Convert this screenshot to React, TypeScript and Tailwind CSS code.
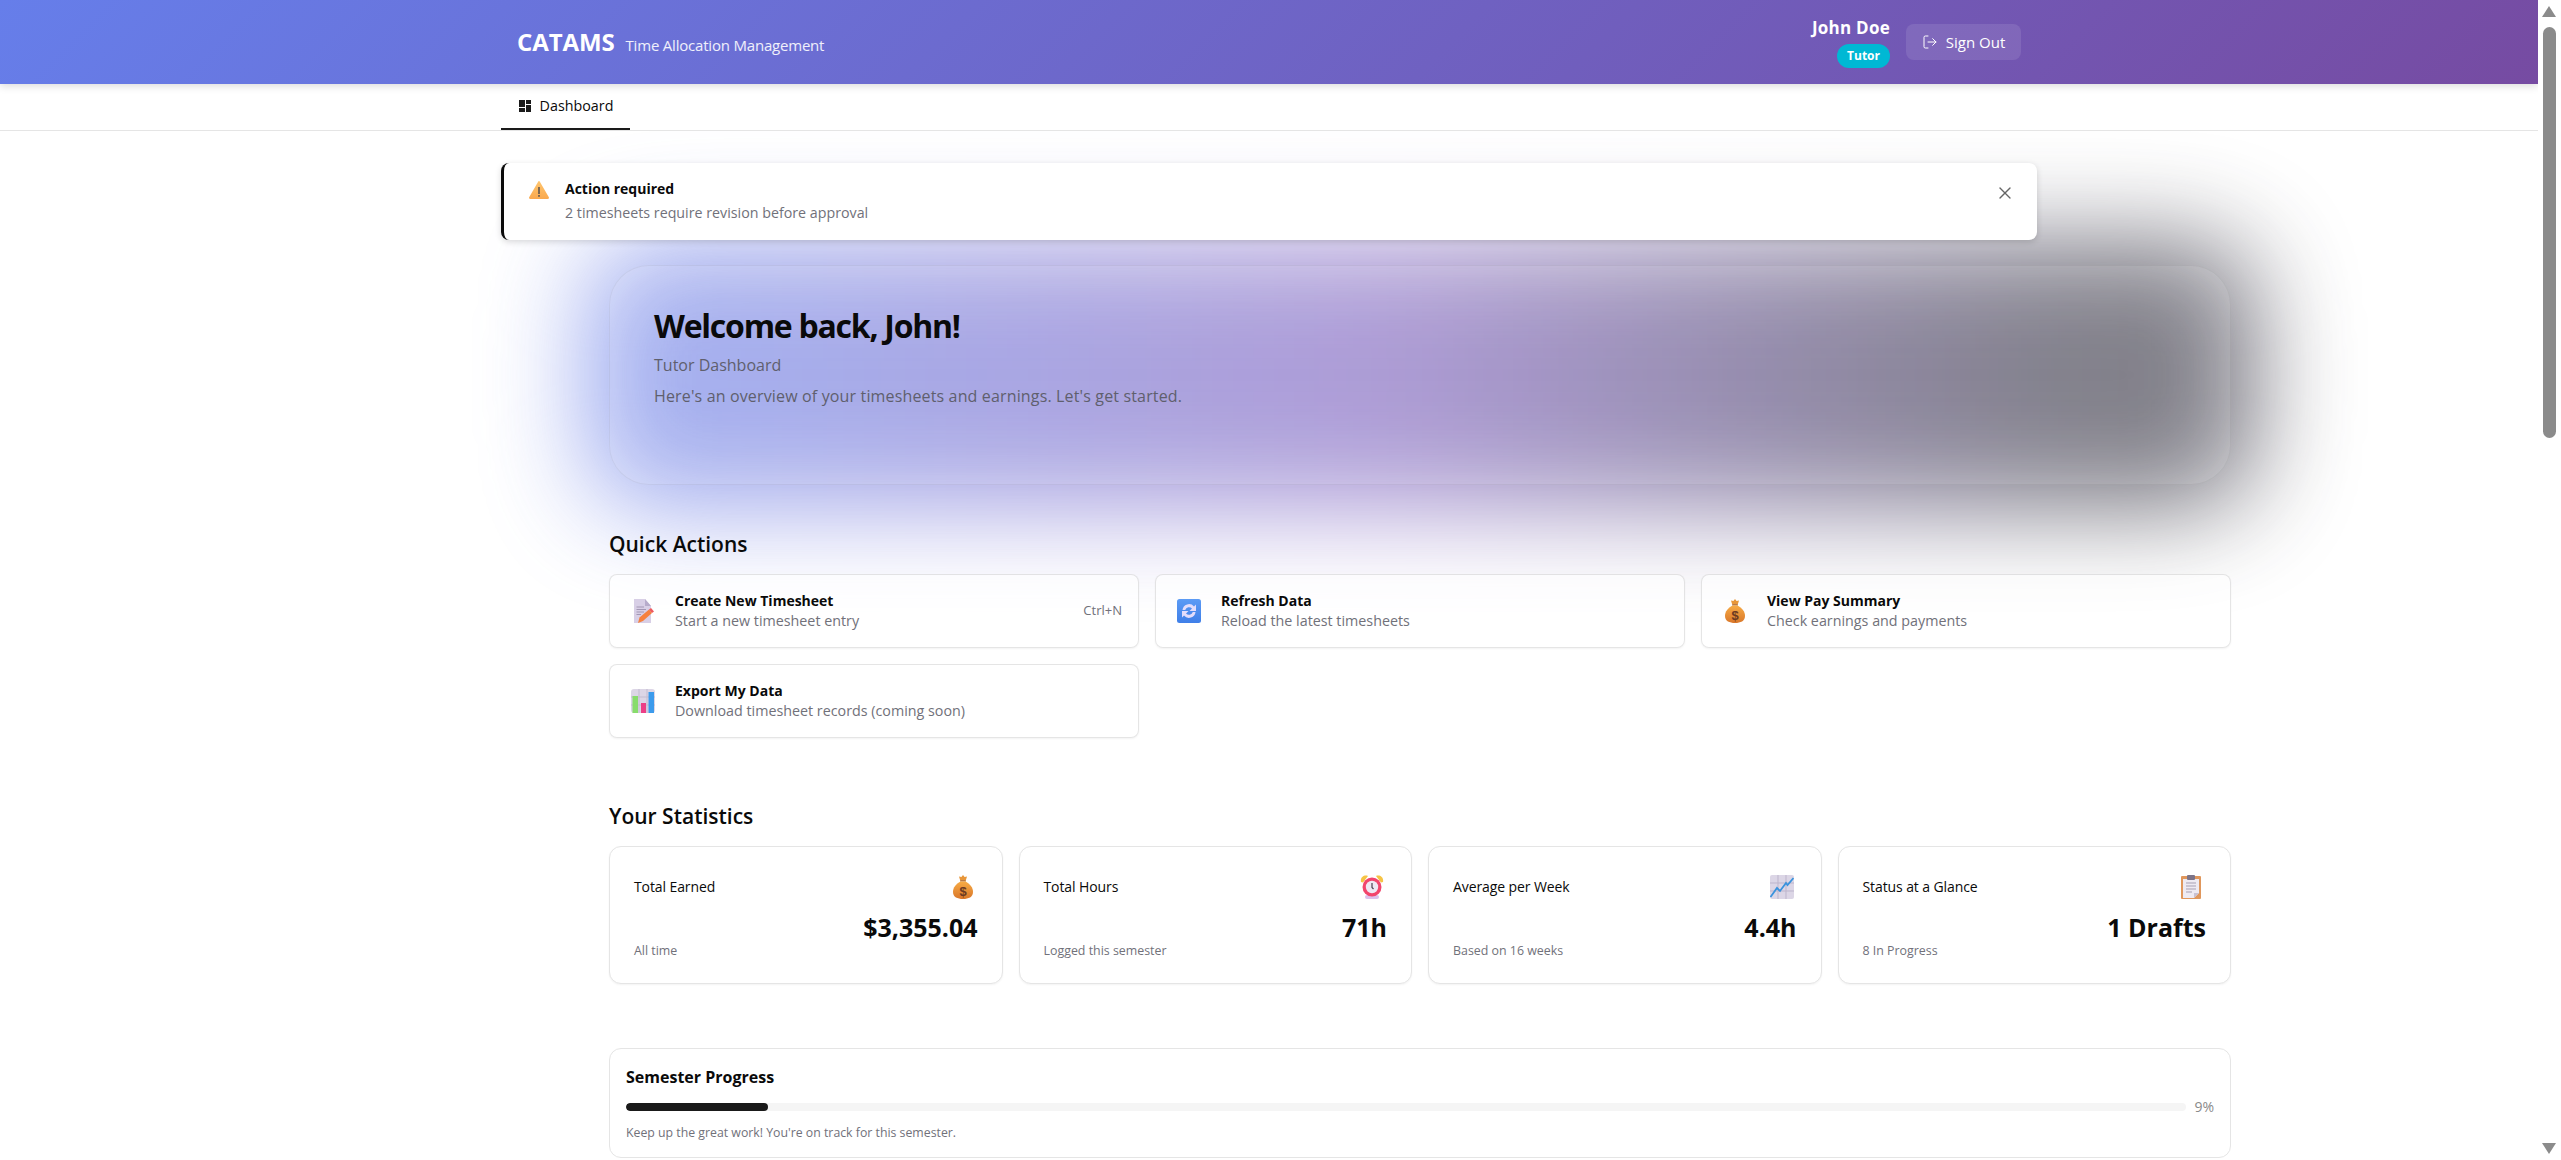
import { LogOut, X } from "lucide-react";

const font = "[font-family:'Open_Sans',sans-serif]";

const WarningIcon = () => (
  <svg width="20" height="18" viewBox="0 0 20 18">
    <defs>
      <linearGradient id="warn" x1="0" y1="0" x2="0" y2="1">
        <stop offset="0" stopColor="#ffc56e" />
        <stop offset="1" stopColor="#f9a94f" />
      </linearGradient>
    </defs>
    <path d="M10 0 Q10.6 0 11 1 L20 16.5 Q20 18 18.5 18 H1.5 Q0 18 0 16.5 L9 1 Q9.4 0 10 0 Z" fill="url(#warn)" />
    <rect x="9.2" y="6" width="1.6" height="7" fill="#5d5550" />
    <rect x="9.2" y="14" width="1.6" height="1.8" fill="#5d5550" />
  </svg>
);

const MemoIcon = () => (
  <svg width="24" height="24" viewBox="0 0 24 24">
    <path d="M3 0 H14 L20 7 V24 H3 Z" fill="#d8cfe6" />
    <path d="M14 0 L20 7 H14 Z" fill="#b7accb" />
    <path d="M5.5 8 H13 M5.5 10.5 H15 M5.5 13 H13 M5.5 15.5 H10" stroke="#a397b4" strokeWidth="1" />
    <path d="M7 24 L8.5 18.5 L18 10.5 L21 14 L12 22 Z" fill="#f6813f" />
    <path d="M18 10.5 L20 9 L23 12.5 L21 14 Z" fill="#ee5a5f" />
  </svg>
);

const RefreshIcon = () => (
  <svg width="24" height="24" viewBox="0 0 24 24">
    <defs>
      <linearGradient id="refresh" x1="0" y1="0" x2="0" y2="1">
        <stop offset="0" stopColor="#5c9bf5" />
        <stop offset="1" stopColor="#3f7fe8" />
      </linearGradient>
    </defs>
    <rect x="0" y="0" width="24" height="24" rx="2.5" fill="url(#refresh)" />
    <path d="M5.5 11 A6.5 6.5 0 0 1 17 7.5 L19 5.5 V12 H12.5 L15 9.6 A4 4 0 0 0 8.2 11 Z" fill="#e3ddfb" />
    <path d="M18.5 13 A6.5 6.5 0 0 1 7 16.5 L5 18.5 V12 H11.5 L9 14.4 A4 4 0 0 0 15.8 13 Z" fill="#e3ddfb" />
  </svg>
);

const BagIcon = () => (
  <svg width="24" height="24" viewBox="0 0 24 24">
    <defs>
      <linearGradient id="bag" x1="0" y1="0" x2="0" y2="1">
        <stop offset="0" stopColor="#f7ab45" />
        <stop offset="1" stopColor="#d9772a" />
      </linearGradient>
    </defs>
    <path d="M12 0 L13.6 2 L16 1.5 L14.8 5.5 H9.2 L8 1.5 L10.4 2 Z" fill="#e8973a" />
    <rect x="9" y="5.2" width="6" height="1.4" rx="0.7" fill="#a8622a" />
    <path d="M9.5 6.5 H14.5 C19 9 22 12.5 22 17 C22 22 17.5 24 12 24 C6.5 24 2 22 2 17 C2 12.5 5 9 9.5 6.5 Z" fill="url(#bag)" />
    <text x="12" y="20.5" textAnchor="middle" fontSize="13" fontWeight="700" fill="#6b3a22" fontFamily="'Liberation Sans',sans-serif">$</text>
  </svg>
);

const BarsIcon = () => (
  <svg width="24" height="24" viewBox="0 0 24 24">
    <rect x="0" y="0" width="24" height="24" rx="3" fill="#dcd6e6" />
    <path d="M0 8 H24 M0 16 H24 M8 0 V24 M16 0 V24" stroke="#c3bcd0" strokeWidth="1" />
    <rect x="1.5" y="7" width="5.5" height="17" fill="#88dc6c" />
    <rect x="10" y="14" width="5" height="10" fill="#ec3f86" />
    <rect x="17.5" y="3" width="5.5" height="21" fill="#3c9bec" />
  </svg>
);

const ClockIcon = () => (
  <svg width="24" height="24" viewBox="0 0 24 24">
    <path d="M1 7 C0 2.5 4 -0.5 8 1 L3 7.5 Z M23 7 C24 2.5 20 -0.5 16 1 L21 7.5 Z" fill="#f6c445" />
    <rect x="5" y="20" width="14" height="4" rx="2" fill="#dcc0ec" />
    <circle cx="12" cy="12" r="9.5" fill="#f2456d" />
    <circle cx="12" cy="12" r="6.2" fill="#efe8f4" />
    <path d="M12 8 V12.5 L13.5 14" stroke="#4a4150" strokeWidth="1.2" fill="none" />
  </svg>
);

const ChartIcon = () => (
  <svg width="24" height="24" viewBox="0 0 24 24">
    <rect x="0" y="0" width="24" height="24" rx="2" fill="#dcd6e6" />
    <path d="M0 8 H24 M0 16 H24 M8 0 V24 M16 0 V24" stroke="#bdb5cc" strokeWidth="1" />
    <path d="M0.5 22 L7 13 L10 16 L16 8 L17.5 10 L23.5 3" fill="none" stroke="#3a93dd" strokeWidth="1.8" />
  </svg>
);

const ClipboardIcon = () => (
  <svg width="24" height="24" viewBox="0 0 24 24">
    <rect x="2" y="1" width="20" height="23" rx="1" fill="#e0975c" />
    <path d="M4 4 H20 V18 L15 23 H4 Z" fill="#eeeaf2" />
    <path d="M20 18 L15 23 V18 Z" fill="#c9c1d2" />
    <rect x="8" y="0" width="8" height="5" rx="1" fill="#7c7488" />
    <path d="M7 8 H17 M7 11 H17 M7 14 H17 M7 17 H13" stroke="#a79fb2" strokeWidth="1" />
  </svg>
);

const actions = [
  { icon: <MemoIcon />, title: "Create New Timesheet", sub: "Start a new timesheet entry", kbd: "Ctrl+N" },
  { icon: <RefreshIcon />, title: "Refresh Data", sub: "Reload the latest timesheets" },
  { icon: <BagIcon />, title: "View Pay Summary", sub: "Check earnings and payments" },
  { icon: <BarsIcon />, title: "Export My Data", sub: "Download timesheet records (coming soon)" },
];

const stats = [
  { label: "Total Earned", value: "$3,355.04", sub: "All time", icon: <BagIcon /> },
  { label: "Total Hours", value: "71h", sub: "Logged this semester", icon: <ClockIcon /> },
  { label: "Average per Week", value: "4.4h", sub: "Based on 16 weeks", icon: <ChartIcon /> },
  { label: "Status at a Glance", value: "1 Drafts", sub: "8 In Progress", icon: <ClipboardIcon /> },
];

export default function App() {
  return (
    <div className={`${font} h-[1160px] overflow-hidden flex bg-white text-[#0a0a0a]`}>
      <div className="w-[2538px] shrink-0 relative overflow-hidden">
        <header className="relative z-20 h-[84px] bg-[linear-gradient(135deg,#667eea_0%,#764ba2_100%)] shadow-[0_2px_8px_rgba(0,0,0,0.15)]">
          <div className="w-[1536px] mx-auto h-full px-4 flex items-center justify-between text-white">
            <div className="flex items-baseline gap-[11px]">
              <span className="text-[24px] font-bold tracking-[-0.1px]">CATAMS</span>
              <span className="text-[15px] text-white/90 tracking-[-0.2px]">Time Allocation Management</span>
            </div>
            <div className="flex items-center gap-4">
              <div className="flex flex-col items-end gap-[6px] mt-[2px]">
                <span className="text-[17px] leading-5 font-bold tracking-[0.25px]">John Doe</span>
                <span className="h-6 px-[10px] rounded-full bg-[#00b8d4] text-[12px] font-bold leading-6">Tutor</span>
              </div>
              <button className="h-9 w-[115px] rounded-lg bg-white/10 flex items-center justify-center gap-2 text-[15px]">
                <LogOut size={16} strokeWidth={1.5} />
                Sign Out
              </button>
            </div>
          </div>
        </header>

        <nav className="relative z-10 h-[47px] border-b border-[#e5e5e5] bg-white">
          <div className="w-[1536px] mx-auto">
            <div className="w-[129px] h-[46px] border-b-2 border-[#1a1a1a] flex items-center justify-center gap-2 text-[14.3px]">
              <svg width="14" height="14" viewBox="0 0 14 14" fill="#1a1a1a">
                <rect x="1" y="1" width="6" height="7" />
                <rect x="8" y="1" width="5" height="4" />
                <rect x="1" y="9" width="6" height="4" />
                <rect x="8" y="6" width="5" height="7" />
              </svg>
              Dashboard
            </div>
          </div>
        </nav>

        <main className="pt-8">
          <div className="relative z-10 mx-auto w-[1536px] h-[77px] rounded-lg bg-white border-l-[3px] border-[#0a0a0a] shadow-[0_2px_6px_rgba(0,0,0,0.15)] flex justify-between pl-[25px] pr-[22px] pt-[16px]">
            <div className="flex gap-4">
              <div className="pt-[2px]">
                <WarningIcon />
              </div>
              <div>
                <div className="text-[14px] leading-5 font-bold">Action required</div>
                <div className="text-[14.25px] leading-5 mt-1 text-[#71717a]">2 timesheets require revision before approval</div>
              </div>
            </div>
            <X size={20} strokeWidth={1.6} className="mt-[4px] text-[#666666]" />
          </div>

          <div className="ml-[609px] w-[1622px]">
            <section className="relative mt-[25px] h-[220px]">
              <div className="absolute -inset-[22px] rounded-[60px] blur-[52px] opacity-[0.65] bg-[linear-gradient(90deg,#667eea_0%,#7557ba_48%,#2a2838_90%)]" />
              <div className="relative h-full rounded-[40px] border border-black/5 bg-white/10 px-[44px] pt-[38px]">
                <h1 className="text-[32px] leading-[44px] font-bold tracking-[-1.25px] text-[#0a0a0a]">Welcome back, John!</h1>
                <p className="text-[16px] leading-6 mt-[5px] text-[#5f5f6d]">Tutor Dashboard</p>
                <p className="text-[16px] leading-6 mt-[7px] text-[#5f5f6d] tracking-[0.15px]">Here's an overview of your timesheets and earnings. Let's get started.</p>
              </div>
            </section>

            <section className="relative mt-[45px]">
              <h2 className="text-[21px] leading-7 font-semibold">Quick Actions</h2>
              <div className="grid grid-cols-3 gap-4 mt-4">
                {actions.map((a) => (
                  <div key={a.title} className="h-[74px] rounded-lg border border-black/10 bg-white/60 shadow-[0_1px_2px_rgba(0,0,0,0.05)] flex items-center pl-[21px] pr-[16px]">
                    <div className="w-[24px] shrink-0">{a.icon}</div>
                    <div className="ml-5 flex-1">
                      <div className="text-[14px] leading-5 font-bold">{a.title}</div>
                      <div className="text-[14.3px] leading-5 text-[#71717a]">{a.sub}</div>
                    </div>
                    {a.kbd && <span className="text-[13px] text-[#71717a]">{a.kbd}</span>}
                  </div>
                ))}
              </div>
            </section>

            <section className="relative mt-[64px]">
              <h2 className="text-[21px] leading-7 font-semibold">Your Statistics</h2>
              <div className="grid grid-cols-4 gap-4 mt-4">
                {stats.map((s) => (
                  <div key={s.label} className="h-[138px] rounded-xl border border-[#e5e5e5] bg-white shadow-[0_1px_2px_rgba(0,0,0,0.05)] px-6 pt-[30px]">
                    <div className="flex justify-between h-5">
                      <span className="text-[14px] leading-5 tracking-[-0.1px]">{s.label}</span>
                      <span className="-mt-[2px] mr-[3px]">{s.icon}</span>
                    </div>
                    <div className="text-[25px] leading-8 font-bold text-right mt-[14px]">{s.value}</div>
                    <div className="text-[12.4px] leading-4 text-[#71717a]">{s.sub}</div>
                  </div>
                ))}
              </div>
            </section>

            <section className="relative mt-[64px] h-[110px] rounded-xl border border-[#e5e5e5] bg-white px-4 pt-4">
              <h3 className="text-[16px] leading-6 font-bold">Semester Progress</h3>
              <div className="flex items-center gap-2 mt-2">
                <div className="flex-1 h-2 rounded-full bg-[#f5f5f5] overflow-hidden">
                  <div className="h-full w-[9.1%] rounded-full bg-[#1a1a1a]" />
                </div>
                <span className="text-[14px] leading-5 text-[#8a8a8a]">9%</span>
              </div>
              <p className="text-[12.3px] leading-4 text-[#71717a] mt-2">Keep up the great work! You're on track for this semester.</p>
            </section>
          </div>
        </main>
      </div>

      <div className="relative w-[23px] shrink-0 bg-white pl-[4px]">
        <div className="mt-[6px] w-0 h-0 border-x-[7px] border-x-transparent border-b-[11px] border-b-[#8b8b8b]" />
        <div className="ml-[1px] mt-[10px] w-[13px] h-[411px] rounded-full bg-[#8b8b8b]" />
        <div className="absolute bottom-[6px] left-[4px] w-0 h-0 border-x-[7px] border-x-transparent border-t-[11px] border-t-[#8b8b8b]" />
      </div>
    </div>
  );
}
